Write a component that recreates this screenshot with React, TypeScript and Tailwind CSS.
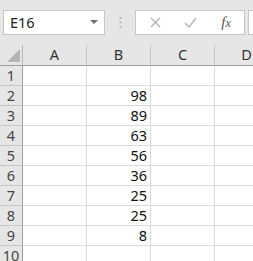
import React from "react";

const data: (number | null)[] = [null, 98, 89, 63, 56, 36, 25, 25, 8, null];
const cols = ["A", "B", "C", "D"];

export default function App() {
  return (
    <div
      className="w-[253px] h-[261px] overflow-hidden bg-white"
      style={{ fontFamily: '"Segoe UI", "Noto Sans", "Liberation Sans", sans-serif' }}
    >
      {/* toolbar */}
      <div className="h-[45px] bg-[#e6e6e6] flex items-center pl-[3px]">
        <div className="w-[102px] h-[25px] shrink-0 border border-[#c6c6c6] bg-white flex items-center pl-[6px] pr-[6px]">
          <span className="text-[14.5px] text-[#222] leading-none flex-1">E16</span>
          <svg width="8" height="5" viewBox="0 0 8 5">
            <path d="M0 0 L8 0 L4 4 Z" fill="#6d6d6d" />
          </svg>
        </div>
        <div className="w-[30px] shrink-0 flex justify-center">
          <svg width="3" height="11" viewBox="0 0 3 11">
            <rect x="0.5" y="0" width="2" height="2" fill="#b9b9b9" />
            <rect x="0.5" y="4.5" width="2" height="2" fill="#b9b9b9" />
            <rect x="0.5" y="9" width="2" height="2" fill="#b9b9b9" />
          </svg>
        </div>
        <div className="w-[110px] h-[25px] shrink-0 border border-[#c6c6c6] bg-white flex items-center">
          <div className="w-[36px] flex justify-center pl-[2px]">
            <svg width="11" height="11" viewBox="0 0 11 11">
              <path d="M1 1 L10 10 M10 1 L1 10" stroke="#b3b3b3" strokeWidth="1.3" fill="none" />
            </svg>
          </div>
          <div className="w-[36px] flex justify-center">
            <svg width="13" height="11" viewBox="0 0 13 11">
              <path d="M1 6 L5 10 L12 1" stroke="#b3b3b3" strokeWidth="1.4" fill="none" />
            </svg>
          </div>
          <div className="w-[36px] flex justify-center">
            <span
              className="italic text-[15px] leading-none text-[#555]"
              style={{ fontFamily: '"Liberation Serif", "DejaVu Serif", serif' }}
            >
              f<span className="text-[12px]">x</span>
            </span>
          </div>
        </div>
        <div className="w-[20px] h-[25px] shrink-0 ml-[3px] border border-[#c6c6c6] bg-white" />
      </div>

      {/* header row */}
      <div className="flex h-[21px] bg-[#e6e6e6] border-b border-[#9f9f9f]">
        <div className="w-[23px] shrink-0 border-r border-[#b8b8b8] relative">
          <svg className="absolute left-[7px] top-[4px]" width="13" height="13" viewBox="0 0 13 13">
            <path d="M13 0 L13 13 L0 13 Z" fill="#b4b4b4" />
          </svg>
        </div>
        {cols.map((c) => (
          <div
            key={c}
            className="w-[64px] shrink-0 border-r border-[#c4c4c4] flex items-center justify-center text-[14.5px] text-[#333]"
          >
            {c}
          </div>
        ))}
      </div>

      {/* rows */}
      {data.map((v, i) => (
        <div key={i} className="flex h-[20px]">
          <div className="w-[23px] shrink-0 bg-[#e6e6e6] border-r border-b border-r-[#9f9f9f] border-b-[#c6c6c6] flex items-center justify-center text-[14.5px] text-[#444] leading-none">
            {i + 1}
          </div>
          {cols.map((c) => (
            <div
              key={c}
              className="w-[64px] shrink-0 border-r border-b border-[#dadada] flex items-center justify-end pr-[3px] text-[14.5px] text-[#111] leading-none"
            >
              {c === "B" && v !== null ? v : ""}
            </div>
          ))}
        </div>
      ))}
    </div>
  );
}
